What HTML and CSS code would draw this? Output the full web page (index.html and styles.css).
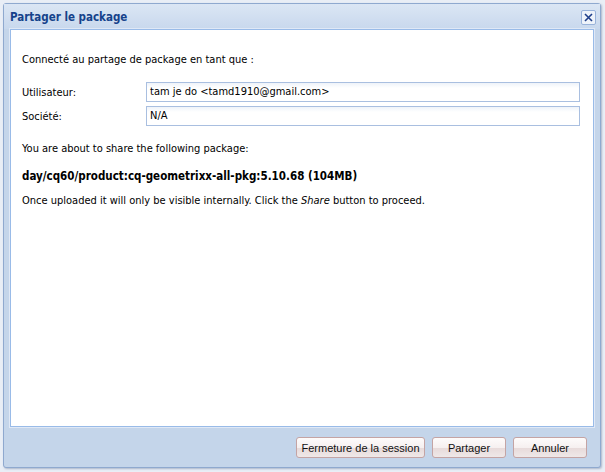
FILE: index.html
```html
<!DOCTYPE html>
<html>
<head>
<meta charset="utf-8">
<link rel="stylesheet" href="styles.css">
</head>
<body>
<div class="window">
  <div class="header">
    <span class="title">Partager le package</span>
    <span class="close"><svg width="13" height="13" viewBox="0 0 13 13"><path d="M3 3 L10 10 M10 3 L3 10" stroke="#1f3f8a" stroke-width="1.6" fill="none"/></svg></span>
  </div>
  <div class="panel">
    <div class="content">
      <p class="intro">Connecté au partage de package en tant que :</p>
      <div class="form">
        <div class="row"><label>Utilisateur:</label><div class="field">tam je do &lt;tamd1910@gmail.com&gt;</div></div>
        <div class="row"><label>Société:</label><div class="field">N/A</div></div>
      </div>
      <p class="about">You are about to share the following package:</p>
      <p class="pkg">day/cq60/product:cq-geometrixx-all-pkg:5.10.68 (104MB)</p>
      <p class="note">Once uploaded it will only be visible internally. Click the <em>Share</em> button to proceed.</p>
    </div>
  </div>
  <div class="footer">
    <button class="btn wide">Fermeture de la session</button>
    <button class="btn">Partager</button>
    <button class="btn">Annuler</button>
  </div>
</div>
</body>
</html>
```
FILE: styles.css
```css
html, body {
  margin: 0;
  padding: 0;
  height: 100%;
}
body {
  background: #e9eef6;
  font-family: "DejaVu Sans Condensed", "DejaVu Sans", sans-serif;
  font-size: 11px;
  color: #000;
  padding: 3px 4px 4px 3px;
  box-sizing: border-box;
}
.window {
  height: 465px;
  box-sizing: border-box;
  border: 1px solid #8fa9cf;
  border-radius: 3px;
  background: #c4d5ea;
  display: flex;
  flex-direction: column;
  box-shadow: 1px 1px 2px rgba(80,100,140,0.4);
}
.header {
  height: 25px;
  display: flex;
  align-items: center;
  justify-content: space-between;
  padding: 0 4px 0 6px;
  background: linear-gradient(#dbe6f4, #c8d8ed);
}
.title {
  font-family: "DejaVu Sans Condensed", "DejaVu Sans", sans-serif;
  font-weight: bold;
  font-size: 11.5px;
  color: #15428b;
  margin-top: 1px;
}
.close {
  width: 13px;
  height: 13px;
  border: 1px solid #99b3da;
  border-radius: 2px;
  background: #eef3fa;
  display: flex;
  margin-top: 1px;
}
.panel {
  margin: 0 6px;
  height: 396px;
  border: 1px solid #99bbe8;
  background: #fff;
  box-shadow: 0 0 0 1px #dfe8f6;
}
.content {
  padding: 23px 12px 0 11px;
}
p {
  margin: 0;
}
.intro {
  line-height: 14px;
}
.form {
  margin-top: 15px;
  display: flex;
  flex-direction: column;
  gap: 4px;
}
.row {
  display: flex;
  align-items: center;
}
.row label {
  width: 124px;
}
.field {
  flex: 1;
  height: 18px;
  border: 1px solid #a9bfe0;
  background: linear-gradient(#eef3f9, #fff 5px);
  padding: 0 3px;
  line-height: 18px;
  margin-right: 1px;
}
.about {
  margin-top: 16px;
}
.pkg {
  margin-top: 14px;
  font-weight: bold;
  font-size: 11.5px;
}
.note {
  margin-top: 11px;
}
.footer {
  flex: 1;
  display: flex;
  justify-content: flex-end;
  align-items: flex-start;
  gap: 7px;
  padding: 10px 13px 0 0;
}
.btn {
  font-family: "Liberation Sans", Arial, sans-serif;
  font-size: 11px;
  white-space: nowrap;
  color: #111;
  height: 21px;
  width: 74px;
  padding: 0;
  border: 1px solid #c4a4a4;
  border-radius: 3px;
  background: linear-gradient(#fdfbfb 0%, #f6f0f0 50%, #e7dada 52%, #efe8e8 100%);
}
.btn.wide {
  width: 129px;
}
```
